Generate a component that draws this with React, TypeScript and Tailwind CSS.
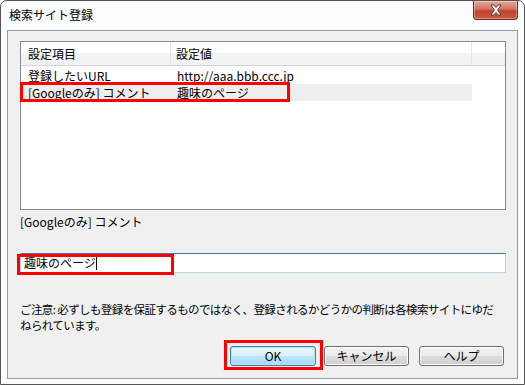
import React from "react";

const FONT = "font-['Noto_Sans_CJK_JP','Noto_Sans',sans-serif]";

function CloseButton() {
  return (
    <div className="w-[45px] h-[19px] rounded-b-[4px] border border-t-0 border-[#6b2d22] bg-[linear-gradient(#e9a99b,#d5725f_45%,#c0422d_55%,#cc5a3f)] flex items-center justify-center shadow-[inset_0_0_0_1px_rgba(255,255,255,0.35)]">
      <svg width="14" height="12" viewBox="0 0 14 12">
        <path
          d="M2 1 L5 1 L7 3.5 L9 1 L12 1 L8.6 6 L12 11 L9 11 L7 8.5 L5 11 L2 11 L5.4 6 Z"
          fill="#fff"
          stroke="#3b3b3b"
          strokeWidth="0.9"
          strokeLinejoin="round"
        />
      </svg>
    </div>
  );
}

function Button({
  label,
  focused,
  w,
}: {
  label: string;
  focused?: boolean;
  w: string;
}) {
  return (
    <button
      className={
        focused
          ? `${w} h-[20px] leading-[18px] rounded-[3px] border border-[#3c7fb1] bg-[linear-gradient(#eaf6fd,#d9f0fc_50%,#bee6fd_50%,#a7d9f5)] shadow-[inset_0_0_0_1px_#b4e2f9] text-[12px] text-black`
          : `${w} h-[20px] leading-[18px] rounded-[3px] border border-[#707070] bg-[linear-gradient(#f2f2f2,#ebebeb_50%,#dddddd_50%,#cfcfcf)] shadow-[inset_0_0_0_1px_#fcfcfc] text-[12px] text-black`
      }
    >
      {label}
    </button>
  );
}

export default function App() {
  return (
    <div
      className={`${FONT} w-[525px] h-[385px] bg-[#fbfcfd] border border-[#555] rounded-t-[7px] flex flex-col text-black overflow-hidden`}
    >
      {/* title bar */}
      <div className="h-[29px] flex items-start justify-between pl-[8px] pr-[6px]">
        <span className="text-[12px] leading-[14px] mt-[7px]">検索サイト登録</span>
        <CloseButton />
      </div>

      {/* client area */}
      <div className="ml-[6px] mr-[6px] h-[349px] border border-[#9b9b9b] bg-[#f0f0f0] flex flex-col pl-[12px] pr-[11px]">
        {/* list view */}
        <div className="relative mt-[10px] h-[169px] border border-[#828790] bg-white">
          <div className="flex h-[24px] border-b border-[#d5d5d5] bg-[linear-gradient(#ffffff,#ffffff_50%,#f3f4f6_50%,#f1f2f4)] text-[12px]">
            <div className="w-[150px] pl-[7px] flex items-center border-r border-[#e3e4e6]">設定項目</div>
            <div className="w-[301px] pl-[5px] flex items-center border-r border-[#e3e4e6]">設定値</div>
            <div className="flex-1" />
          </div>
          <div className="flex h-[17px] items-center text-[12px] mt-[1px]">
            <div className="w-[150px] pl-[7px]">登録したいURL</div>
            <div className="w-[301px] pl-[6px]">http://aaa.bbb.ccc.jp</div>
          </div>
          <div className="flex h-[17px] items-center text-[12px] w-[451px] bg-[#eeeeee]">
            <div className="w-[150px] pl-[7px]">[Googleのみ] コメント</div>
            <div className="w-[301px] pl-[6px]">趣味のページ</div>
          </div>
          <div className="absolute left-[-1px] top-[40px] w-[270px] h-[20px] border-[3px] border-[#ff0000]" />
        </div>

        {/* label */}
        <div className="mt-[4px] text-[12px] leading-[16px]">[Googleのみ] コメント</div>

        {/* input */}
        <div className="relative mt-[23px] h-[20px] border border-[#abadb3] border-t-[#3d7bad] border-b-[#b7d9ed] border-l-[#b5cfe7] border-r-[#b5cfe7] bg-white flex items-center pl-[3px] text-[12px]">
          <span>趣味のページ</span>
          <span className="w-[1px] h-[13px] bg-black" />
          <div className="absolute left-[-4px] top-[0px] w-[157px] h-[21px] border-[3px] border-[#ff0000]" />
        </div>

        {/* note */}
        <div className="mt-[28px] text-[11.5px] leading-[16px] tracking-[-0.6px]">
          <div>ご注意: 必ずしも登録を保証するものではなく、登録されるかどうかの判断は各検索サイトにゆだ</div>
          <div>ねられています。</div>
        </div>

        {/* buttons */}
        <div className="mt-[13px] flex justify-end pr-[2px]">
          <div className="relative flex">
            <Button label="OK" focused w="w-[86px]" />
            <div className="absolute left-[-6px] top-[-6px] w-[99px] h-[30px] border-[3px] border-[#ff0000]" />
          </div>
          <div className="ml-[8px] flex">
            <Button label="キャンセル" w="w-[85px]" />
          </div>
          <div className="ml-[10px] flex">
            <Button label="ヘルプ" w="w-[85px]" />
          </div>
        </div>
      </div>
    </div>
  );
}
